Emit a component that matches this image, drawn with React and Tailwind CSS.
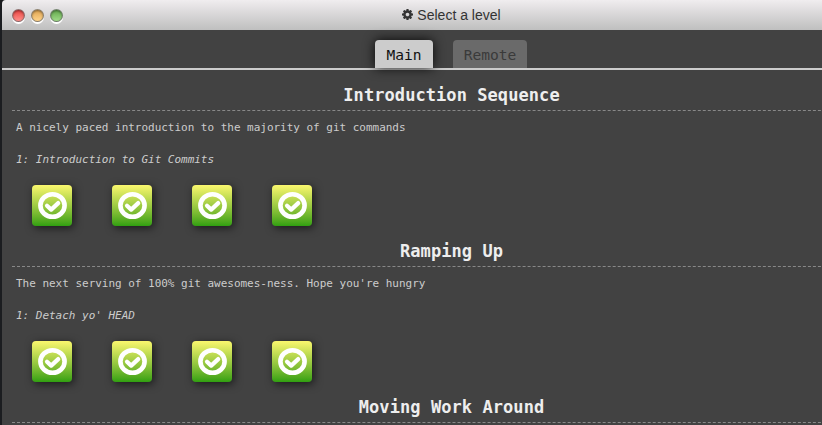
const MONO = "font-['DejaVu_Sans_Mono',monospace]";

function Light({ className }) {
  return (
    <span
      className={
        "size-[13px] rounded-full border border-[#6b6b6b]/75 shadow-[0_2px_0_0_#fff,inset_0_1px_2px_rgba(0,0,0,.4)] " +
        className
      }
    />
  );
}

function Cog() {
  return (
    <svg viewBox="128 128 1536 1536" className="size-[11px] -translate-y-px fill-[#333]">
      <path d="M1152 896q0-106-75-181t-181-75-181 75-75 181 75 181 181 75 181-75 75-181zm512-109v222q0 12-8 23t-20 13l-185 28q-19 54-39 91 35 50 107 138 10 12 10 25t-9 23q-27 37-99 108t-94 71q-12 0-26-9l-138-108q-44 23-91 38-16 136-29 186-7 28-36 28h-222q-14 0-24.5-8.5t-11.5-21.5l-28-184q-49-16-90-37l-141 107q-10 9-25 9-14 0-25-11-126-114-165-168-7-10-7-23 0-12 8-23 15-21 51-66.5t54-70.5q-27-50-41-99l-183-27q-13-2-21-12.5t-8-23.5v-222q0-12 8-23t19-13l186-28q14-46 39-92-40-57-107-138-10-12-10-24 0-10 9-23 26-36 98.5-107.5t94.5-71.5q13 0 26 10l138 107q44-23 91-38 16-136 29-186 7-28 36-28h222q14 0 24.500 8.500t11.500 21.500l28 184q49 16 90 37l142-107q9-9 24-9 13 0 25 10 129 119 165 170 7 8 7 22 0 12-8 23-15 21-51 66.500t-54 70.500q26 50 41 98l183 28q13 2 21 12.500t8 23.500z" />
    </svg>
  );
}

function LevelTile() {
  return (
    <button className="h-[41px] w-10 rounded-[4px] bg-linear-to-b from-[#faf76e] to-[#2fa010] shadow-[2px_2px_9px_rgba(0,0,0,.6)]">
      <svg viewBox="0 0 40 41" className="h-[41px] w-10 fill-none stroke-white">
        <ellipse cx="20.5" cy="20.5" rx="12.1" ry="11.3" strokeWidth="4.6" />
        <path d="M15 20.700l4.200 3.900 7-6.500" strokeWidth="4.2" strokeLinecap="round" strokeLinejoin="round" />
      </svg>
    </button>
  );
}

function Sequence({ title, about, name }) {
  return (
    <section className="h-[156px]">
      <h3 className="h-[27px] border-b border-dashed border-[#888] text-center text-[17px] leading-[23px] font-bold tracking-[0.07px] text-[#eee]">
        {title}
      </h3>
      {about && (
        <div className="px-1 text-[11px] leading-4 tracking-[-0.02px] text-[#ccc]">
          <p className="pt-[9px]">{about}</p>
          <p className="pt-4 italic">{name}</p>
          <div className="flex gap-10 pt-[17px] pl-4">
            <LevelTile />
            <LevelTile />
            <LevelTile />
            <LevelTile />
          </div>
        </div>
      )}
    </section>
  );
}

export default function App() {
  return (
    <div className="h-[425px] w-[822px] overflow-hidden bg-[#1b1d20] pl-0.5">
      <div className={"h-[425px] w-[899px] overflow-hidden rounded-tl-[4px] bg-[#424242] " + MONO}>
        <header className="grid h-[30px] grid-cols-[1fr_auto_1fr] items-center bg-linear-to-b from-[#f0edef] to-[#bfbfbf]">
          <div className="flex gap-1.5 pl-[9.500px]">
            <Light className="bg-linear-to-b from-[#e83f40] to-[#ff8f8a]" />
            <Light className="bg-linear-to-b from-[#dfa450] to-[#ffd48a]" />
            <Light className="bg-linear-to-b from-[#62a84c] to-[#a0dc88]" />
          </div>
          <h1 className="flex items-center gap-1 font-['Liberation_Sans',Arial,sans-serif] text-[14px] text-[#333]">
            <Cog />
            Select a level
          </h1>
        </header>
        <nav className="flex h-10 justify-center gap-5 border-b-2 border-[#ccc] pt-2.5 pr-px text-[14.600px] leading-[30px]">
          <div className="h-7 w-[58px] rounded-t-[4px] bg-[#ccc] text-center text-[#111] shadow-[0_0_12px_rgba(0,0,0,.9)]">
            Main
          </div>
          <div className="h-7 w-[74px] rounded-t-[4px] bg-[#6a6a6a] text-center text-[#3a3a3a]">Remote</div>
        </nav>
        <main className="px-2.5 pt-3.5">
          <Sequence
            title="Introduction Sequence"
            about="A nicely paced introduction to the majority of git commands"
            name="1: Introduction to Git Commits"
          />
          <Sequence
            title="Ramping Up"
            about="The next serving of 100% git awesomes-ness. Hope you're hungry"
            name="1: Detach yo' HEAD"
          />
          <Sequence title="Moving Work Around" />
        </main>
      </div>
    </div>
  );
}
